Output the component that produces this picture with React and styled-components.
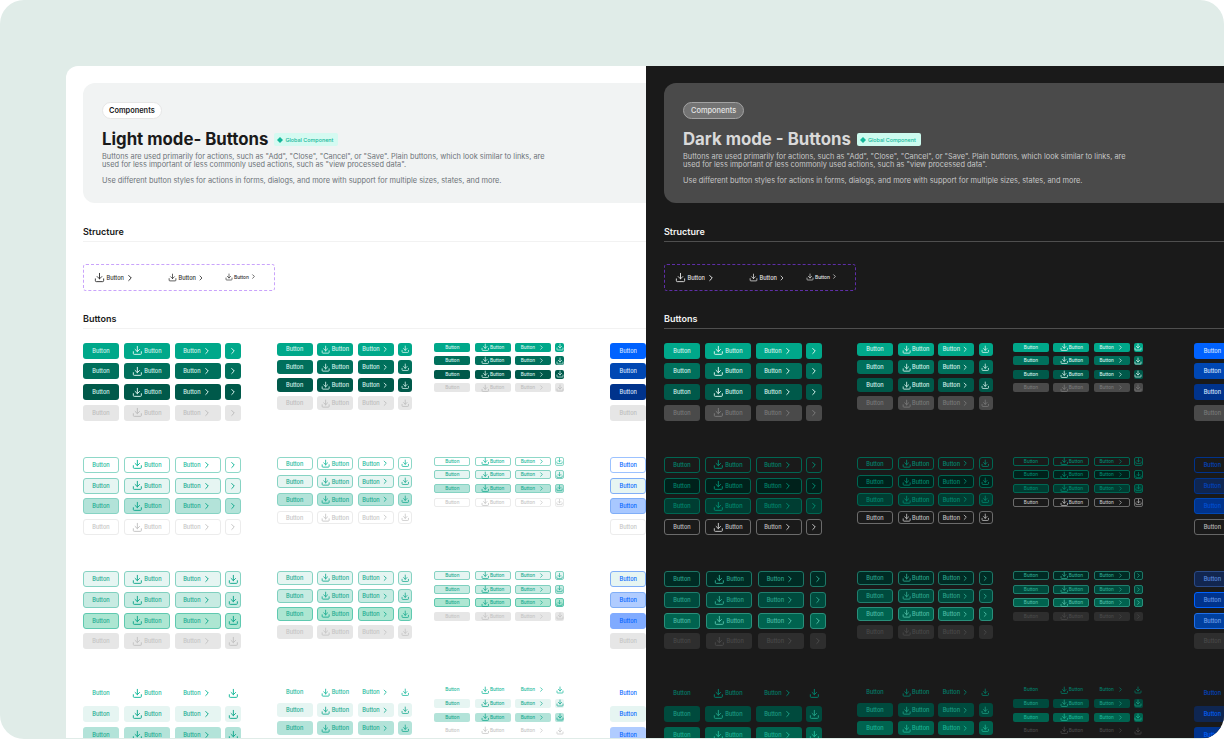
import React from 'react'
import styled, { createGlobalStyle } from 'styled-components'
import { Download, ChevronRight } from 'lucide-react'

const GlobalStyle = createGlobalStyle`
  html, body {
    margin: 0;
    padding: 0;
    background: #fff;
  }
  * {
    box-sizing: border-box;
  }
`

const Page = styled.div`
  width: 1224px;
  height: 739px;
  padding: 66px 0 0 66px;
  background: #e0ece8;
  border-radius: 24px;
  overflow: hidden;
  font-family: Inter, "Liberation Sans", sans-serif;
`

const Board = styled.div`
  display: flex;
  height: 672px;
  border-top-left-radius: 12px;
  overflow: hidden;
`

const Pane = styled.section`
  flex: none;
  width: ${p => p.$dark ? 578 : 580}px;
  padding: 17px 0 0 ${p => p.$dark ? 18 : 17}px;
  overflow: hidden;
  background: ${p => p.$dark ? '#1a1a1a' : '#fff'};
`

const Hero = styled.header`
  width: 700px;
  height: 120px;
  padding: 19px 19px;
  border-radius: 12px;
  background: ${p => p.$dark ? '#4a4a4a' : '#f1f3f3'};
`

const Pill = styled.div`
  display: flex;
  align-items: center;
  width: fit-content;
  height: 17px;
  padding: 0 ${p => p.$dark ? 7 : 6}px;
  border-radius: 9px;
  border: 1px solid ${p => p.$dark ? '#a3a3a3' : '#e6e6e6'};
  background: ${p => p.$dark ? '#737373' : '#fff'};
  color: ${p => p.$dark ? '#e5e5e5' : '#1a1a1a'};
  font-size: 7.4px;
  font-weight: ${p => p.$dark ? 500 : 600};
`

const TitleRow = styled.div`
  display: flex;
  align-items: center;
  gap: 6px;
  margin-top: 12px;
  height: 17px;
`

const Title = styled.h1`
  margin: 0;
  font-size: 16.8px;
  line-height: 17px;
  font-weight: 700;
  color: ${p => p.$dark ? '#d9d9d9' : '#1a1a1a'};
  white-space: nowrap;
`

const Tag = styled.span`
  display: inline-flex;
  align-items: center;
  gap: 2px;
  height: 13.5px;
  padding: 0 5px 0 3px;
  border-radius: 2px;
  background: ${p => p.$dark ? '#ccfbef' : '#d5faf1'};
  color: #14b89a;
  font-size: 5.4px;
  font-weight: 500;
`

const Copy = styled.p`
  width: 450px;
  margin: ${p => p.$gap}px 0 0;
  font-size: 7.38px;
  line-height: 8px;
  color: ${p => p.$dark ? '#c7c7c7' : '#6c7278'};
`

const Section = styled.h2`
  margin: ${p => p.$top}px 0 0;
  height: 14px;
  font-size: 9px;
  line-height: 14px;
  font-weight: 600;
  color: ${p => p.$dark ? '#f2f2f2' : '#1a1a1a'};
  border-bottom: ${p => p.$dark ? '1px solid #4f4f4f' : '1px solid #f2f2f2'};
  width: 600px;
  box-sizing: content-box;
  padding-bottom: 2px;
`

const Anatomy = styled.div`
  display: flex;
  align-items: center;
  width: 191.5px;
  height: 27px;
  margin-top: 22.5px;
  padding-left: 10px;
  border: 1px dashed ${p => p.$dark ? '#5f2ea8' : '#c9a3fb'};
  border-radius: 3px;
`

const Sample = styled.span`
  display: inline-flex;
  align-items: center;
  flex: none;
  width: ${p => p.$width}px;
  gap: ${p => p.$gap}px;
  font-size: ${p => p.$font}px;
  font-weight: 500;
  color: ${p => p.$dark ? '#e5e5e5' : '#2e2e2e'};
  position: relative;
  top: ${p => p.$lift ? -1 : 0}px;
`

const Grid = styled.div`
  display: grid;
  grid-template-columns: ${p => p.$dark ? '193px 156px 181.4px 36px' : '193.7px 157.6px 176px 36px'};
  grid-auto-rows: 114.3px;
  margin-top: 14px;
`

const Cluster = styled.div`
  display: flex;
  flex-direction: column;
  gap: ${p => p.$gap}px;
`

const Row = styled.div`
  display: flex;
  gap: ${p => p.$gap}px;
`

const Btn = styled.span`
  flex: none;
  display: flex;
  align-items: center;
  justify-content: center;
  gap: ${p => p.$gap}px;
  width: ${p => p.$w}px;
  height: ${p => p.$h}px;
  border-radius: ${p => p.$radius}px;
  background: ${p => p.$tone.bg};
  border: ${p => p.$tone.line ? `0.7px solid ${p.$tone.line}` : 'none'};
  color: ${p => p.$tone.fg};
  font-size: ${p => p.$font}px;
  font-weight: 500;
  white-space: nowrap;
`

const T = (bg, fg, line) => ({ bg, fg, line })
const NONE = 'transparent'

const LIGHT_TEAL = [
  [T('#00a88a', '#d9f4ee'), T('#00705c', '#d9f4ee'), T('#00594a', '#d9f4ee'), T('#e6e6e6', '#bdbdbd')],
  [T('#fff', '#14b89a', '#8ed8c8'), T('#e6f5f2', '#14a98e', '#86d3c3'), T('#b3e3d9', '#14a98e', '#86d3c3'), T('#fff', '#c4c4c4', '#ececec')],
  [T('#e6f5f2', '#14a98e', '#86d3c3'), T('#c7ebe2', '#14a98e', '#7fd0bf'), T('#ade6d2', '#14a98e', '#5fc9b0'), T('#e6e6e6', '#c4c4c4')],
  [T(NONE, '#14b89a'), T('#e6f5f2', '#14a98e'), T('#b3e3d9', '#14a98e'), T(NONE, '#c4c4c4')],
]

const LIGHT_BLUE = [
  [T('#0062ff', '#d9e8ff'), T('#0047b3', '#d9e8ff'), T('#00338c', '#d9e8ff'), T('#e6e6e6', '#bdbdbd')],
  [T('#fff', '#0062ff', '#9cc2ff'), T('#e6f5f2', '#0062ff', '#80aef7'), T('#a8c8ff', '#0062ff', '#80aef7'), T('#fff', '#c4c4c4', '#ececec')],
  [T('#e6f5f2', '#0062ff', '#80aef7'), T('#b0ccff', '#0062ff', '#80aef7'), T('#80abff', '#0062ff', '#80abff'), T('#e6e6e6', '#c4c4c4')],
  [T(NONE, '#0062ff'), T('#e6f5f2', '#0062ff'), T('#b0ccff', '#0062ff'), T(NONE, '#c4c4c4')],
]

const DARK_TEAL = [
  [T('#00a88a', '#d9f4ee'), T('#00705c', '#d9f4ee'), T('#00594a', '#d9f4ee'), T('#4a4a4a', '#7a7a7a')],
  [T(NONE, '#008a70', '#006652'), T('#00211b', '#008a70', '#006652'), T('#003d32', '#008a70', '#006652'), T(NONE, '#c4c4c4', '#6b6b6b')],
  [T('#002b24', '#2ea88f', '#1e7666'), T('#004a3d', '#2ea88f', '#1f7f6e'), T('#00634f', '#52bfa8', '#2a8f7b'), T('#2e2e2e', '#4a4a4a')],
  [T(NONE, '#00806a'), T('#004a3d', '#1f9f85'), T('#00634f', '#1fb596'), T(NONE, '#4a4a4a')],
]

const DARK_BLUE = [
  [T('#0062ff', '#d9e8ff'), T('#0047b3', '#d9e8ff'), T('#00338c', '#d9e8ff'), T('#4a4a4a', '#7a7a7a')],
  [T(NONE, '#0047c8', '#00338c'), T('#0f2651', '#0047c8', '#00338c'), T('#00338c', '#0052d9', '#0047b3'), T(NONE, '#bdbdbd', '#666')],
  [T('#12264f', '#5d8ee0', '#2b4a86'), T('#00338c', '#6b9bea', '#0062ff'), T('#00409f', '#7aa6ee', '#1f6fe8'), T('#2e2e2e', '#4a4a4a')],
  [T(NONE, '#0047c8'), T('#0f2651', '#0062ff'), T('#00338c', '#0062ff'), T(NONE, '#4a4a4a')],
]

// icon boxes are larger than the glyph: lucide leaves padding inside the 24 box
const SIZES = {
  lg: { h: 16, widths: [36, 46, 46, 16], font: 5.6, radius: 3, gap: 4.75, rowGap: 4.75, icon: 10.7, iconGap: 1.7, chevron: 10, chevronGap: 1.25, solo: 10.7 },
  md: { h: 13.6, widths: [36, 36, 36, 14], font: 5.6, radius: 3, gap: 4.5, rowGap: 4.4, icon: 9.3, iconGap: 1.1, chevron: 8.5, chevronGap: 0.8, solo: 8.5 },
  sm: { h: 9, widths: [36, 36, 36, 9], font: 4.6, radius: 2, gap: 4.3, rowGap: 4.6, icon: 8.5, iconGap: 0.8, chevron: 7, chevronGap: 3, solo: 8 },
}

function Cell({ kind, size, tone }) {
  const s = SIZES[size]
  const base = { $h: s.h, $radius: s.radius, $font: s.font, $tone: tone }

  if (kind === 'lead') {
    return (
      <Btn {...base} $w={s.widths[1]} $gap={s.iconGap}>
        <Download size={s.icon} strokeWidth={2.2} />
        Button
      </Btn>
    )
  }
  if (kind === 'trail') {
    return (
      <Btn {...base} $w={s.widths[2]} $gap={s.chevronGap}>
        Button
        <ChevronRight size={s.chevron} strokeWidth={2.4} />
      </Btn>
    )
  }
  if (kind === 'solo') {
    return <Btn {...base} $w={s.widths[3]}><Download size={s.solo} strokeWidth={2.2} /></Btn>
  }
  if (kind === 'soloArrow') {
    return <Btn {...base} $w={s.widths[3]}><ChevronRight size={s.chevron} strokeWidth={2.4} /></Btn>
  }
  return <Btn {...base} $w={s.widths[0]}>Button</Btn>
}

function Set({ size, tones, last, gap }) {
  const s = SIZES[size]
  return (
    <Cluster $gap={s.rowGap}>
      {tones.map((tone, i) => (
        <Row key={i} $gap={gap ?? s.gap}>
          <Cell kind="plain" size={size} tone={tone} />
          <Cell kind="lead" size={size} tone={tone} />
          <Cell kind="trail" size={size} tone={tone} />
          <Cell kind={last} size={size} tone={tone} />
        </Row>
      ))}
    </Cluster>
  )
}

function BlueSet({ tones }) {
  return (
    <Cluster $gap={SIZES.lg.rowGap}>
      {tones.map((tone, i) => (
        <Cell key={i} kind="plain" size="lg" tone={tone} />
      ))}
    </Cluster>
  )
}

const LAST_LIGHT = [
  ['soloArrow', 'solo', 'solo'],
  ['soloArrow', 'solo', 'solo'],
  ['solo', 'solo', 'solo'],
  ['solo', 'solo', 'solo'],
]

const LAST_DARK = [
  ['soloArrow', 'solo', 'solo'],
  ['soloArrow', 'solo', 'solo'],
  ['soloArrow', 'soloArrow', 'soloArrow'],
  ['solo', 'solo', 'solo'],
]

function Diamond() {
  return (
    <svg width="6" height="6" viewBox="0 0 12 12" fill="#14b89a">
      <path d="M6 0l6 6-6 6-6-6z" />
    </svg>
  )
}

function Mode({ dark, title }) {
  const teal = dark ? DARK_TEAL : LIGHT_TEAL
  const blue = dark ? DARK_BLUE : LIGHT_BLUE
  const last = dark ? LAST_DARK : LAST_LIGHT

  return (
    <Pane $dark={dark}>
      <Hero $dark={dark}>
        <Pill $dark={dark}>Components</Pill>
        <TitleRow>
          <Title $dark={dark}>{title}</Title>
          <Tag $dark={dark}><Diamond />Global Component</Tag>
        </TitleRow>
        <Copy $dark={dark} $gap={4.5}>
          Buttons are used primarily for actions, such as "Add", "Close", "Cancel", or "Save". Plain buttons, which look similar to links, are used for less important or less commonly used actions, such as "view processed data".
        </Copy>
        <Copy $dark={dark} $gap={8}>
          Use different button styles for actions in forms, dialogs, and more with support for multiple sizes, states, and more.
        </Copy>
      </Hero>

      <Section $dark={dark} $top={21.5}>Structure</Section>
      <Anatomy $dark={dark}>
        <Sample $dark={dark} $width={74} $gap={1.5} $font={5.6}>
          <Download size={11} strokeWidth={2} />Button<ChevronRight size={10} strokeWidth={2.4} />
        </Sample>
        <Sample $dark={dark} $width={57} $gap={1.5} $font={5.6}>
          <Download size={9} strokeWidth={2} />Button<ChevronRight size={8} strokeWidth={2.4} />
        </Sample>
        <Sample $dark={dark} $width={40} $gap={1} $font={4.8} $lift>
          <Download size={8} strokeWidth={2} />Button<ChevronRight size={7} strokeWidth={2.4} />
        </Sample>
      </Anatomy>

      <Section $dark={dark} $top={20.5}>Buttons</Section>

      <Grid $dark={dark}>
        {teal.map((tones, i) => (
          <React.Fragment key={i}>
            <Set size="lg" tones={tones} last={last[i][0]} gap={dark && i === 2 ? 6 : undefined} />
            <Set size="md" tones={tones} last={last[i][1]} />
            <Set size="sm" tones={tones} last={last[i][2]} />
            <BlueSet tones={blue[i]} />
          </React.Fragment>
        ))}
      </Grid>
    </Pane>
  )
}

export default function App() {
  return (
    <>
      <GlobalStyle />
      <Page>
        <Board>
          <Mode title="Light mode- Buttons" />
          <Mode dark title="Dark mode - Buttons" />
        </Board>
      </Page>
    </>
  )
}
